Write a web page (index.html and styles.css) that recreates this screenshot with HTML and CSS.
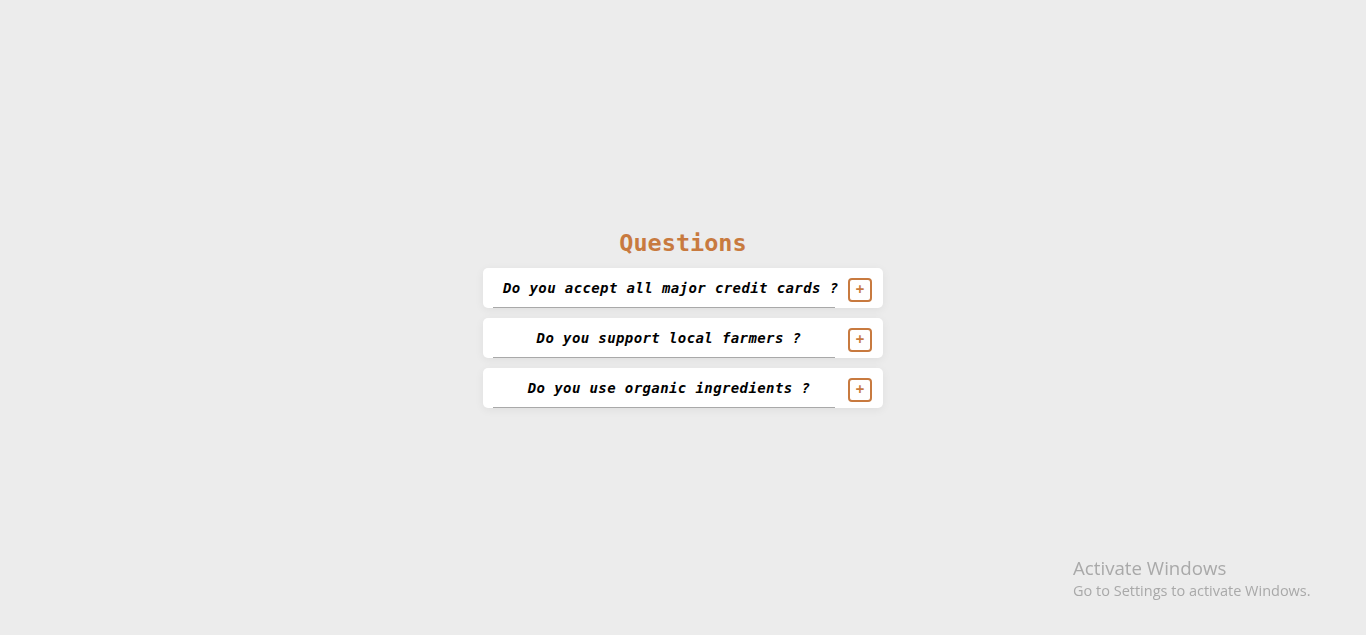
FILE: index.html
```html
<!DOCTYPE html>
<html lang="en">
<head>
<meta charset="utf-8">
<title>Questions</title>
<link rel="stylesheet" href="styles.css">
</head>
<body>
<main class="faq">
  <h2 class="title">Questions</h2>
  <div class="card">
    <div class="question">Do you accept all major credit cards ?</div>
    <button class="toggle">+</button>
  </div>
  <div class="card">
    <div class="question">Do you support local farmers ?</div>
    <button class="toggle">+</button>
  </div>
  <div class="card">
    <div class="question">Do you use organic ingredients ?</div>
    <button class="toggle">+</button>
  </div>
</main>
<div class="activate">
  <div class="act-title">Activate Windows</div>
  <div class="act-sub">Go to Settings to activate Windows.</div>
</div>
</body>
</html>
```
FILE: styles.css
```css
html, body {
  margin: 0;
  height: 100%;
}
body {
  background: #ececec;
  display: flex;
  align-items: center;
  justify-content: center;
  font-family: "DejaVu Sans Mono", monospace;
}
.faq {
  width: 400px;
  display: flex;
  flex-direction: column;
  gap: 10px;
}
.title {
  margin: 0;
  text-align: center;
  font-size: 23.5px;
  line-height: 30px;
  color: #c87a3f;
  font-weight: bold;
}
.card {
  background: #fff;
  height: 40px;
  border-radius: 5px;
  box-shadow: 0 2px 10px rgba(0,0,0,0.06);
  display: flex;
  align-items: center;
  padding: 0 11px 0 10px;
  box-sizing: border-box;
}
.question {
  width: 342px;
  height: 40px;
  box-sizing: border-box;
  padding-left: 10px;
  line-height: 40px;
  text-align: center;
  white-space: nowrap;
  border-bottom: 1px solid #a9a9a9;
  font-style: italic;
  font-weight: bold;
  font-size: 14px;
  letter-spacing: 0.4px;
  color: #000;
}
.toggle {
  margin-left: auto;
  margin-top: 4px;
  width: 24px;
  height: 24px;
  padding: 0;
  border: 2px solid #c87a3f;
  border-radius: 4px;
  background: #fff;
  color: #c87a3f;
  font-family: "DejaVu Sans Mono", monospace;
  font-weight: bold;
  font-size: 14px;
  line-height: 19px;
}
.activate {
  position: fixed;
  left: 1073px;
  top: 556px;
  font-family: "Open Sans", "Noto Sans", sans-serif;
  color: #a9a9a9;
}
.act-title {
  font-size: 18.7px;
  line-height: 24px;
}
.act-sub {
  font-size: 14.5px;
  line-height: 21px;
}
```
